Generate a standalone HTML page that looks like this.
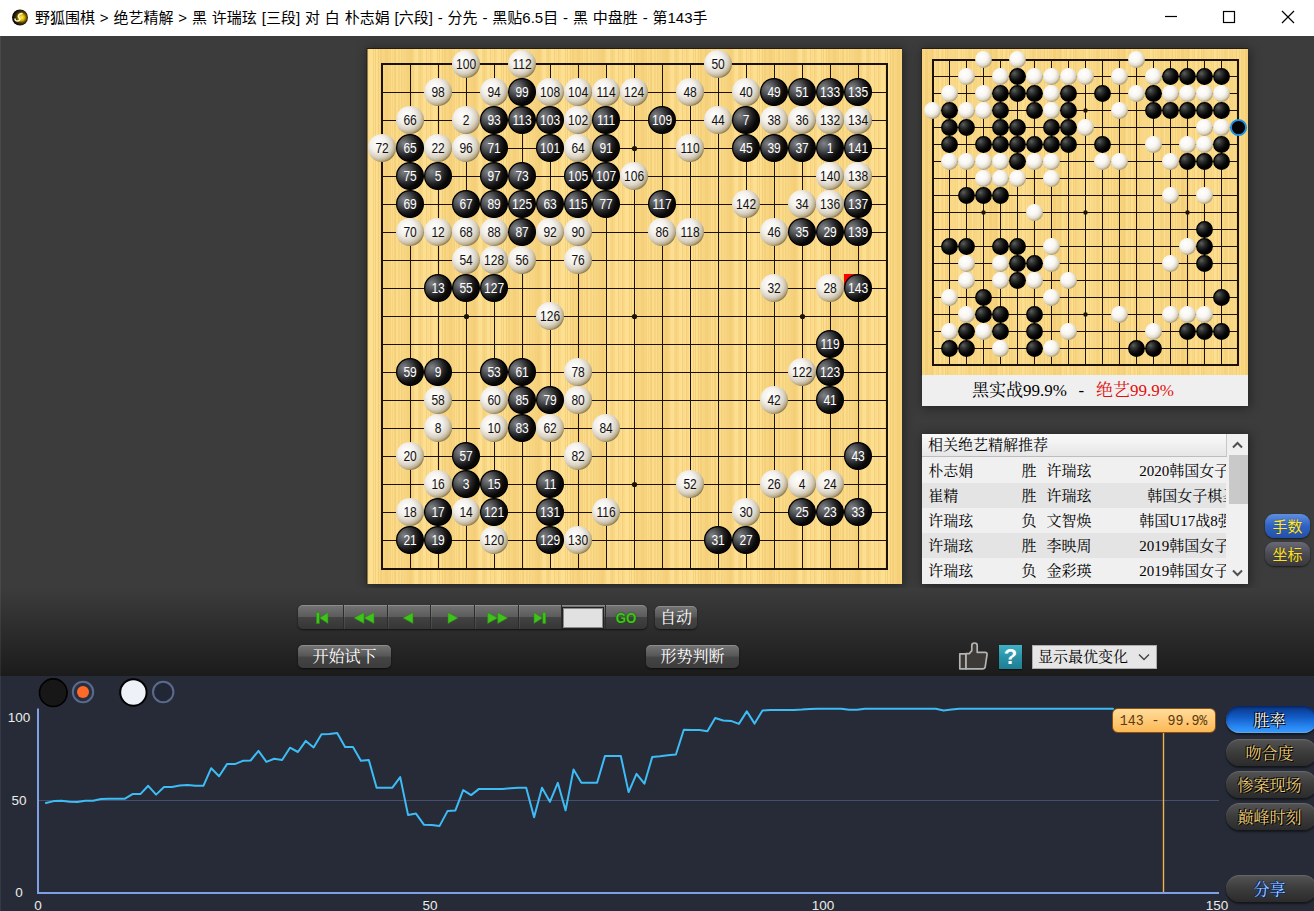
<!DOCTYPE html>
<html lang="zh-CN"><head><meta charset="utf-8"><title>野狐围棋</title>
<style>
html,body{margin:0;padding:0}
body{width:1314px;height:911px;overflow:hidden;position:relative;background:#3c3c3c;font-family:"Liberation Sans","Noto Sans CJK SC",sans-serif}
.abs{position:absolute;display:block}
.sh{box-shadow:1px 1px 10px 1px rgba(0,0,0,.42)}
#title{left:0;top:0;width:1314px;height:36px;background:#fff}
#title .t{position:absolute;left:35px;top:0;line-height:35px;font-size:15px;color:#000;white-space:nowrap;word-spacing:0.7px;font-family:"Liberation Sans","Noto Sans CJK SC",sans-serif}
#fade{left:0;top:588px;width:1314px;height:88px;background:linear-gradient(#3c3c3c,#1b1b1b)}
.song{font-family:"Liberation Serif","Noto Serif CJK SC",serif}
#lbl{left:922px;top:375px;width:326px;height:31px;box-sizing:border-box;padding-left:50px;background:#efefef;text-align:left;line-height:31px;font-size:17px;color:#000;white-space:nowrap}
#list{left:922px;top:434px;width:326px;height:150px;background:#f0f0f0;overflow:hidden;font-size:15px;color:#000}
#list .hd{position:absolute;left:0;top:0;width:305px;height:23px;line-height:23px;padding-left:6px;box-sizing:border-box;background:linear-gradient(#fafafa,#e6e6e6);border-bottom:1px solid #bdbdbd;border-right:1px solid #c8c8c8}
.lr{position:absolute;left:0;width:304px;height:25px;line-height:27px;overflow:hidden;white-space:nowrap}
.lr span{position:absolute;top:0}
#sb{position:absolute;left:305px;top:0;width:21px;height:150px;background:#f0f0f0}
#sb i{position:absolute;left:1.5px;top:21px;width:19px;height:49px;background:#c9c9c9}
.btn{position:absolute;box-sizing:border-box;border-radius:5px;color:#fff;text-align:center;font-size:16px;background:linear-gradient(#757575,#585858 45%,#444 55%,#3c3c3c);box-shadow:0 1px 2px rgba(0,0,0,.6), inset 0 1px 0 rgba(255,255,255,.18)}
.pill{position:absolute;left:1226px;width:91px;height:27px;border-radius:13.5px;box-sizing:border-box;padding-right:4px;text-align:center;line-height:30px;font-size:16px;color:#f3d27a;background:linear-gradient(#545454,#3c3c3c 50%,#2b2b2b);box-shadow:0 2px 2px rgba(0,0,0,.5), inset 0 1px 1px rgba(255,255,255,.12);text-shadow:0 0 1px #000,1px 1px 0 #000,-1px -1px 0 #000}
</style></head><body>
<div id="title" class="abs">
<svg class="abs" style="left:11px;top:9px" width="18" height="18" viewBox="0 0 18 18"><defs><radialGradient id="ic" cx="0.6" cy="0.5" r="0.62"><stop offset="0" stop-color="#fff060"/><stop offset="0.28" stop-color="#e2b800"/><stop offset="0.55" stop-color="#4a3808"/><stop offset="0.8" stop-color="#15100a"/><stop offset="1" stop-color="#000"/></radialGradient></defs><circle cx="9" cy="8.5" r="8" fill="url(#ic)"/><path d="M11 4.500c-3 .3-4.500 2.300-3 4s1.500 3-1.500 3.500c-1.500.1-2.500-.8-2.500-2" fill="none" stroke="#fff8c8" stroke-width="1.500" stroke-linecap="round"/></svg>
<div class="t">野狐围棋 &gt; 绝艺精解 &gt; 黑 许瑞玹 [三段] 对 白 朴志娟 [六段] - 分先 - 黑贴6.5目 - 黑 中盘胜 - 第143手</div>
<svg class="abs" style="left:1150px;top:0" width="164" height="36" viewBox="1150 0 164 36"><g fill="none" stroke="#000" stroke-width="1.2"><path d="M1165 16.5h12"/><rect x="1223.500" y="11.500" width="11" height="11"/><path d="M1282 11l12 12M1294 11l-12 12"/></g></svg>
</div>

<div class="abs sh" style="left:367px;top:49px;width:535px;height:535px"></div>
<div class="abs sh" style="left:922px;top:49px;width:326px;height:357px"></div>
<div class="abs sh" style="left:922px;top:434px;width:326px;height:150px"></div>
<svg class="abs" style="left:366px;top:48px" width="537" height="537" viewBox="366 48 537 537">
<defs><pattern id="wood" width="64" height="8" patternUnits="userSpaceOnUse"><rect width="64" height="8" fill="rgb(247, 212, 128)"/><rect x="0" width="1" height="8" fill="rgb(247, 212, 128)"/><rect x="1" width="1" height="8" fill="rgb(244, 207, 120)"/><rect x="2" width="1" height="8" fill="rgb(245, 209, 124)"/><rect x="3" width="1" height="8" fill="rgb(244, 207, 120)"/><rect x="4" width="2" height="8" fill="rgb(247, 212, 128)"/><rect x="6" width="1" height="8" fill="rgb(245, 209, 124)"/><rect x="7" width="1" height="8" fill="rgb(251, 220, 140)"/><rect x="8" width="1" height="8" fill="rgb(247, 212, 128)"/><rect x="9" width="1" height="8" fill="rgb(251, 220, 140)"/><rect x="10" width="1" height="8" fill="rgb(245, 209, 124)"/><rect x="11" width="1" height="8" fill="rgb(244, 207, 120)"/><rect x="12" width="2" height="8" fill="rgb(251, 220, 140)"/><rect x="14" width="1" height="8" fill="rgb(247, 212, 128)"/><rect x="15" width="1" height="8" fill="rgb(247, 212, 128)"/><rect x="16" width="1" height="8" fill="rgb(251, 220, 140)"/><rect x="17" width="1" height="8" fill="rgb(245, 209, 124)"/><rect x="18" width="2" height="8" fill="rgb(248, 215, 132)"/><rect x="20" width="2" height="8" fill="rgb(247, 212, 128)"/><rect x="22" width="1" height="8" fill="rgb(247, 212, 128)"/><rect x="23" width="1" height="8" fill="rgb(245, 209, 124)"/><rect x="24" width="2" height="8" fill="rgb(245, 209, 124)"/><rect x="26" width="2" height="8" fill="rgb(244, 207, 120)"/><rect x="28" width="2" height="8" fill="rgb(247, 212, 128)"/><rect x="30" width="1" height="8" fill="rgb(251, 220, 140)"/><rect x="31" width="1" height="8" fill="rgb(252, 223, 145)"/><rect x="32" width="2" height="8" fill="rgb(252, 223, 145)"/><rect x="34" width="1" height="8" fill="rgb(248, 215, 132)"/><rect x="35" width="1" height="8" fill="rgb(247, 212, 128)"/><rect x="36" width="1" height="8" fill="rgb(245, 209, 124)"/><rect x="37" width="2" height="8" fill="rgb(248, 215, 132)"/><rect x="39" width="2" height="8" fill="rgb(252, 223, 145)"/><rect x="41" width="1" height="8" fill="rgb(252, 223, 145)"/><rect x="42" width="1" height="8" fill="rgb(245, 209, 124)"/><rect x="43" width="1" height="8" fill="rgb(251, 220, 140)"/><rect x="44" width="1" height="8" fill="rgb(249, 217, 136)"/><rect x="45" width="1" height="8" fill="rgb(252, 223, 145)"/><rect x="46" width="1" height="8" fill="rgb(244, 207, 120)"/><rect x="47" width="1" height="8" fill="rgb(249, 217, 136)"/><rect x="48" width="1" height="8" fill="rgb(249, 217, 136)"/><rect x="49" width="2" height="8" fill="rgb(252, 223, 145)"/><rect x="51" width="2" height="8" fill="rgb(252, 223, 145)"/><rect x="53" width="1" height="8" fill="rgb(245, 209, 124)"/><rect x="54" width="1" height="8" fill="rgb(252, 223, 145)"/><rect x="55" width="1" height="8" fill="rgb(244, 207, 120)"/><rect x="56" width="1" height="8" fill="rgb(252, 223, 145)"/><rect x="57" width="1" height="8" fill="rgb(251, 220, 140)"/><rect x="58" width="1" height="8" fill="rgb(244, 207, 120)"/><rect x="59" width="1" height="8" fill="rgb(249, 217, 136)"/><rect x="60" width="1" height="8" fill="rgb(245, 209, 124)"/><rect x="61" width="1" height="8" fill="rgb(244, 207, 120)"/><rect x="62" width="1" height="8" fill="rgb(248, 215, 132)"/><rect x="63" width="1" height="8" fill="rgb(247, 212, 128)"/></pattern>
<radialGradient id="gw" cx="0.40" cy="0.38" r="0.64" fx="0.36" fy="0.32">
<stop offset="0" stop-color="#ffffff"/><stop offset="0.46" stop-color="#f3f0eb"/><stop offset="0.74" stop-color="#d9d1c1"/><stop offset="0.9" stop-color="#bbae8e"/><stop offset="1" stop-color="#8c7c52"/></radialGradient>
<radialGradient id="gb" cx="0.30" cy="0.36" r="0.6" fx="0.27" fy="0.33">
<stop offset="0" stop-color="#808284"/><stop offset="0.35" stop-color="#58595c"/><stop offset="0.75" stop-color="#202022"/><stop offset="1" stop-color="#080808"/></radialGradient>
<radialGradient id="gws" cx="0.40" cy="0.36" r="0.66" fx="0.38" fy="0.32">
<stop offset="0" stop-color="#ffffff"/><stop offset="0.5" stop-color="#f8f6f2"/><stop offset="0.78" stop-color="#e0d9c8"/><stop offset="1" stop-color="#a89a74"/></radialGradient>
<radialGradient id="gbs" cx="0.32" cy="0.32" r="0.6" fx="0.3" fy="0.3">
<stop offset="0" stop-color="#5c5e5e"/><stop offset="0.35" stop-color="#303232"/><stop offset="0.7" stop-color="#101010"/><stop offset="1" stop-color="#000000"/></radialGradient>
</defs>
<rect x="366.5" y="48" width="535.5" height="536" fill="#241c10"/>
<rect x="367.5" y="49" width="534.5" height="535" fill="url(#wood)"/>
<path d="M410.5 64.5V568.5M382.5 92.5H886.5" stroke="#1c1204" stroke-width="1"/>
<path d="M438.5 64.5V568.5M382.5 120.5H886.5" stroke="#1c1204" stroke-width="1"/>
<path d="M466.5 64.5V568.5M382.5 148.5H886.5" stroke="#1c1204" stroke-width="1"/>
<path d="M494.5 64.5V568.5M382.5 176.5H886.5" stroke="#1c1204" stroke-width="1"/>
<path d="M522.5 64.5V568.5M382.5 204.5H886.5" stroke="#1c1204" stroke-width="1"/>
<path d="M550.5 64.5V568.5M382.5 232.5H886.5" stroke="#1c1204" stroke-width="1"/>
<path d="M578.5 64.5V568.5M382.5 260.5H886.5" stroke="#1c1204" stroke-width="1"/>
<path d="M606.5 64.5V568.5M382.5 288.5H886.5" stroke="#1c1204" stroke-width="1"/>
<path d="M634.5 64.5V568.5M382.5 316.5H886.5" stroke="#1c1204" stroke-width="1"/>
<path d="M662.5 64.5V568.5M382.5 344.5H886.5" stroke="#1c1204" stroke-width="1"/>
<path d="M690.5 64.5V568.5M382.5 372.5H886.5" stroke="#1c1204" stroke-width="1"/>
<path d="M718.5 64.5V568.5M382.5 400.5H886.5" stroke="#1c1204" stroke-width="1"/>
<path d="M746.5 64.5V568.5M382.5 428.5H886.5" stroke="#1c1204" stroke-width="1"/>
<path d="M774.5 64.5V568.5M382.5 456.5H886.5" stroke="#1c1204" stroke-width="1"/>
<path d="M802.5 64.5V568.5M382.5 484.5H886.5" stroke="#1c1204" stroke-width="1"/>
<path d="M830.5 64.5V568.5M382.5 512.5H886.5" stroke="#1c1204" stroke-width="1"/>
<path d="M858.5 64.5V568.5M382.5 540.5H886.5" stroke="#1c1204" stroke-width="1"/>
<rect x="382" y="64" width="505" height="505" fill="none" stroke="#1c1204" stroke-width="2"/>
<circle cx="466.5" cy="148.5" r="2.6" fill="#1c1204"/><circle cx="466.5" cy="316.5" r="2.6" fill="#1c1204"/><circle cx="466.5" cy="484.5" r="2.6" fill="#1c1204"/><circle cx="634.5" cy="148.5" r="2.6" fill="#1c1204"/><circle cx="634.5" cy="316.5" r="2.6" fill="#1c1204"/><circle cx="634.5" cy="484.5" r="2.6" fill="#1c1204"/><circle cx="802.5" cy="148.5" r="2.6" fill="#1c1204"/><circle cx="802.5" cy="316.5" r="2.6" fill="#1c1204"/><circle cx="802.5" cy="484.5" r="2.6" fill="#1c1204"/>
<g font-family="'Liberation Sans',sans-serif" font-size="14" text-anchor="middle">
<circle cx="466" cy="64" r="14" fill="url(#gw)"/>
<text transform="translate(466.1 68.5) scale(.86 1)" fill="#111">100</text>
<circle cx="522" cy="64" r="14" fill="url(#gw)"/>
<text transform="translate(522.1 68.5) scale(.86 1)" fill="#111">112</text>
<circle cx="718" cy="64" r="14" fill="url(#gw)"/>
<text transform="translate(718.1 68.5) scale(.86 1)" fill="#111">50</text>
<circle cx="438" cy="92" r="14" fill="url(#gw)"/>
<text transform="translate(438.1 96.5) scale(.86 1)" fill="#111">98</text>
<circle cx="494" cy="92" r="14" fill="url(#gw)"/>
<text transform="translate(494.1 96.5) scale(.86 1)" fill="#111">94</text>
<circle cx="522" cy="92" r="13.4" fill="url(#gb)" stroke="#000" stroke-width="1.2"/>
<text transform="translate(522.1 96.5) scale(.86 1)" fill="#fff">99</text>
<circle cx="550" cy="92" r="14" fill="url(#gw)"/>
<text transform="translate(550.1 96.5) scale(.86 1)" fill="#111">108</text>
<circle cx="578" cy="92" r="14" fill="url(#gw)"/>
<text transform="translate(578.1 96.5) scale(.86 1)" fill="#111">104</text>
<circle cx="606" cy="92" r="14" fill="url(#gw)"/>
<text transform="translate(606.1 96.5) scale(.86 1)" fill="#111">114</text>
<circle cx="634" cy="92" r="14" fill="url(#gw)"/>
<text transform="translate(634.1 96.5) scale(.86 1)" fill="#111">124</text>
<circle cx="690" cy="92" r="14" fill="url(#gw)"/>
<text transform="translate(690.1 96.5) scale(.86 1)" fill="#111">48</text>
<circle cx="746" cy="92" r="14" fill="url(#gw)"/>
<text transform="translate(746.1 96.5) scale(.86 1)" fill="#111">40</text>
<circle cx="774" cy="92" r="13.4" fill="url(#gb)" stroke="#000" stroke-width="1.2"/>
<text transform="translate(774.1 96.5) scale(.86 1)" fill="#fff">49</text>
<circle cx="802" cy="92" r="13.4" fill="url(#gb)" stroke="#000" stroke-width="1.2"/>
<text transform="translate(802.1 96.5) scale(.86 1)" fill="#fff">51</text>
<circle cx="830" cy="92" r="13.4" fill="url(#gb)" stroke="#000" stroke-width="1.2"/>
<text transform="translate(830.1 96.5) scale(.86 1)" fill="#fff">133</text>
<circle cx="858" cy="92" r="13.4" fill="url(#gb)" stroke="#000" stroke-width="1.2"/>
<text transform="translate(858.1 96.5) scale(.86 1)" fill="#fff">135</text>
<circle cx="410" cy="120" r="14" fill="url(#gw)"/>
<text transform="translate(410.1 124.5) scale(.86 1)" fill="#111">66</text>
<circle cx="466" cy="120" r="14" fill="url(#gw)"/>
<text transform="translate(466.1 124.5) scale(.86 1)" fill="#111">2</text>
<circle cx="494" cy="120" r="13.4" fill="url(#gb)" stroke="#000" stroke-width="1.2"/>
<text transform="translate(494.1 124.5) scale(.86 1)" fill="#fff">93</text>
<circle cx="522" cy="120" r="13.4" fill="url(#gb)" stroke="#000" stroke-width="1.2"/>
<text transform="translate(522.1 124.5) scale(.86 1)" fill="#fff">113</text>
<circle cx="550" cy="120" r="13.4" fill="url(#gb)" stroke="#000" stroke-width="1.2"/>
<text transform="translate(550.1 124.5) scale(.86 1)" fill="#fff">103</text>
<circle cx="578" cy="120" r="14" fill="url(#gw)"/>
<text transform="translate(578.1 124.5) scale(.86 1)" fill="#111">102</text>
<circle cx="606" cy="120" r="13.4" fill="url(#gb)" stroke="#000" stroke-width="1.2"/>
<text transform="translate(606.1 124.5) scale(.86 1)" fill="#fff">111</text>
<circle cx="662" cy="120" r="13.4" fill="url(#gb)" stroke="#000" stroke-width="1.2"/>
<text transform="translate(662.1 124.5) scale(.86 1)" fill="#fff">109</text>
<circle cx="718" cy="120" r="14" fill="url(#gw)"/>
<text transform="translate(718.1 124.5) scale(.86 1)" fill="#111">44</text>
<circle cx="746" cy="120" r="13.4" fill="url(#gb)" stroke="#000" stroke-width="1.2"/>
<text transform="translate(746.1 124.5) scale(.86 1)" fill="#fff">7</text>
<circle cx="774" cy="120" r="14" fill="url(#gw)"/>
<text transform="translate(774.1 124.5) scale(.86 1)" fill="#111">38</text>
<circle cx="802" cy="120" r="14" fill="url(#gw)"/>
<text transform="translate(802.1 124.5) scale(.86 1)" fill="#111">36</text>
<circle cx="830" cy="120" r="14" fill="url(#gw)"/>
<text transform="translate(830.1 124.5) scale(.86 1)" fill="#111">132</text>
<circle cx="858" cy="120" r="14" fill="url(#gw)"/>
<text transform="translate(858.1 124.5) scale(.86 1)" fill="#111">134</text>
<circle cx="382" cy="148" r="14" fill="url(#gw)"/>
<text transform="translate(382.1 152.5) scale(.86 1)" fill="#111">72</text>
<circle cx="410" cy="148" r="13.4" fill="url(#gb)" stroke="#000" stroke-width="1.2"/>
<text transform="translate(410.1 152.5) scale(.86 1)" fill="#fff">65</text>
<circle cx="438" cy="148" r="14" fill="url(#gw)"/>
<text transform="translate(438.1 152.5) scale(.86 1)" fill="#111">22</text>
<circle cx="466" cy="148" r="14" fill="url(#gw)"/>
<text transform="translate(466.1 152.5) scale(.86 1)" fill="#111">96</text>
<circle cx="494" cy="148" r="13.4" fill="url(#gb)" stroke="#000" stroke-width="1.2"/>
<text transform="translate(494.1 152.5) scale(.86 1)" fill="#fff">71</text>
<circle cx="550" cy="148" r="13.4" fill="url(#gb)" stroke="#000" stroke-width="1.2"/>
<text transform="translate(550.1 152.5) scale(.86 1)" fill="#fff">101</text>
<circle cx="578" cy="148" r="14" fill="url(#gw)"/>
<text transform="translate(578.1 152.5) scale(.86 1)" fill="#111">64</text>
<circle cx="606" cy="148" r="13.4" fill="url(#gb)" stroke="#000" stroke-width="1.2"/>
<text transform="translate(606.1 152.5) scale(.86 1)" fill="#fff">91</text>
<circle cx="690" cy="148" r="14" fill="url(#gw)"/>
<text transform="translate(690.1 152.5) scale(.86 1)" fill="#111">110</text>
<circle cx="746" cy="148" r="13.4" fill="url(#gb)" stroke="#000" stroke-width="1.2"/>
<text transform="translate(746.1 152.5) scale(.86 1)" fill="#fff">45</text>
<circle cx="774" cy="148" r="13.4" fill="url(#gb)" stroke="#000" stroke-width="1.2"/>
<text transform="translate(774.1 152.5) scale(.86 1)" fill="#fff">39</text>
<circle cx="802" cy="148" r="13.4" fill="url(#gb)" stroke="#000" stroke-width="1.2"/>
<text transform="translate(802.1 152.5) scale(.86 1)" fill="#fff">37</text>
<circle cx="830" cy="148" r="13.4" fill="url(#gb)" stroke="#000" stroke-width="1.2"/>
<text transform="translate(830.1 152.5) scale(.86 1)" fill="#fff">1</text>
<circle cx="858" cy="148" r="13.4" fill="url(#gb)" stroke="#000" stroke-width="1.2"/>
<text transform="translate(858.1 152.5) scale(.86 1)" fill="#fff">141</text>
<circle cx="410" cy="176" r="13.4" fill="url(#gb)" stroke="#000" stroke-width="1.2"/>
<text transform="translate(410.1 180.5) scale(.86 1)" fill="#fff">75</text>
<circle cx="438" cy="176" r="13.4" fill="url(#gb)" stroke="#000" stroke-width="1.2"/>
<text transform="translate(438.1 180.5) scale(.86 1)" fill="#fff">5</text>
<circle cx="494" cy="176" r="13.4" fill="url(#gb)" stroke="#000" stroke-width="1.2"/>
<text transform="translate(494.1 180.5) scale(.86 1)" fill="#fff">97</text>
<circle cx="522" cy="176" r="13.4" fill="url(#gb)" stroke="#000" stroke-width="1.2"/>
<text transform="translate(522.1 180.5) scale(.86 1)" fill="#fff">73</text>
<circle cx="578" cy="176" r="13.4" fill="url(#gb)" stroke="#000" stroke-width="1.2"/>
<text transform="translate(578.1 180.5) scale(.86 1)" fill="#fff">105</text>
<circle cx="606" cy="176" r="13.4" fill="url(#gb)" stroke="#000" stroke-width="1.2"/>
<text transform="translate(606.1 180.5) scale(.86 1)" fill="#fff">107</text>
<circle cx="634" cy="176" r="14" fill="url(#gw)"/>
<text transform="translate(634.1 180.5) scale(.86 1)" fill="#111">106</text>
<circle cx="830" cy="176" r="14" fill="url(#gw)"/>
<text transform="translate(830.1 180.5) scale(.86 1)" fill="#111">140</text>
<circle cx="858" cy="176" r="14" fill="url(#gw)"/>
<text transform="translate(858.1 180.5) scale(.86 1)" fill="#111">138</text>
<circle cx="410" cy="204" r="13.4" fill="url(#gb)" stroke="#000" stroke-width="1.2"/>
<text transform="translate(410.1 208.5) scale(.86 1)" fill="#fff">69</text>
<circle cx="466" cy="204" r="13.4" fill="url(#gb)" stroke="#000" stroke-width="1.2"/>
<text transform="translate(466.1 208.5) scale(.86 1)" fill="#fff">67</text>
<circle cx="494" cy="204" r="13.4" fill="url(#gb)" stroke="#000" stroke-width="1.2"/>
<text transform="translate(494.1 208.5) scale(.86 1)" fill="#fff">89</text>
<circle cx="522" cy="204" r="13.4" fill="url(#gb)" stroke="#000" stroke-width="1.2"/>
<text transform="translate(522.1 208.5) scale(.86 1)" fill="#fff">125</text>
<circle cx="550" cy="204" r="13.4" fill="url(#gb)" stroke="#000" stroke-width="1.2"/>
<text transform="translate(550.1 208.5) scale(.86 1)" fill="#fff">63</text>
<circle cx="578" cy="204" r="13.4" fill="url(#gb)" stroke="#000" stroke-width="1.2"/>
<text transform="translate(578.1 208.5) scale(.86 1)" fill="#fff">115</text>
<circle cx="606" cy="204" r="13.4" fill="url(#gb)" stroke="#000" stroke-width="1.2"/>
<text transform="translate(606.1 208.5) scale(.86 1)" fill="#fff">77</text>
<circle cx="662" cy="204" r="13.4" fill="url(#gb)" stroke="#000" stroke-width="1.2"/>
<text transform="translate(662.1 208.5) scale(.86 1)" fill="#fff">117</text>
<circle cx="746" cy="204" r="14" fill="url(#gw)"/>
<text transform="translate(746.1 208.5) scale(.86 1)" fill="#111">142</text>
<circle cx="802" cy="204" r="14" fill="url(#gw)"/>
<text transform="translate(802.1 208.5) scale(.86 1)" fill="#111">34</text>
<circle cx="830" cy="204" r="14" fill="url(#gw)"/>
<text transform="translate(830.1 208.5) scale(.86 1)" fill="#111">136</text>
<circle cx="858" cy="204" r="13.4" fill="url(#gb)" stroke="#000" stroke-width="1.2"/>
<text transform="translate(858.1 208.5) scale(.86 1)" fill="#fff">137</text>
<circle cx="410" cy="232" r="14" fill="url(#gw)"/>
<text transform="translate(410.1 236.5) scale(.86 1)" fill="#111">70</text>
<circle cx="438" cy="232" r="14" fill="url(#gw)"/>
<text transform="translate(438.1 236.5) scale(.86 1)" fill="#111">12</text>
<circle cx="466" cy="232" r="14" fill="url(#gw)"/>
<text transform="translate(466.1 236.5) scale(.86 1)" fill="#111">68</text>
<circle cx="494" cy="232" r="14" fill="url(#gw)"/>
<text transform="translate(494.1 236.5) scale(.86 1)" fill="#111">88</text>
<circle cx="522" cy="232" r="13.4" fill="url(#gb)" stroke="#000" stroke-width="1.2"/>
<text transform="translate(522.1 236.5) scale(.86 1)" fill="#fff">87</text>
<circle cx="550" cy="232" r="14" fill="url(#gw)"/>
<text transform="translate(550.1 236.5) scale(.86 1)" fill="#111">92</text>
<circle cx="578" cy="232" r="14" fill="url(#gw)"/>
<text transform="translate(578.1 236.5) scale(.86 1)" fill="#111">90</text>
<circle cx="662" cy="232" r="14" fill="url(#gw)"/>
<text transform="translate(662.1 236.5) scale(.86 1)" fill="#111">86</text>
<circle cx="690" cy="232" r="14" fill="url(#gw)"/>
<text transform="translate(690.1 236.5) scale(.86 1)" fill="#111">118</text>
<circle cx="774" cy="232" r="14" fill="url(#gw)"/>
<text transform="translate(774.1 236.5) scale(.86 1)" fill="#111">46</text>
<circle cx="802" cy="232" r="13.4" fill="url(#gb)" stroke="#000" stroke-width="1.2"/>
<text transform="translate(802.1 236.5) scale(.86 1)" fill="#fff">35</text>
<circle cx="830" cy="232" r="13.4" fill="url(#gb)" stroke="#000" stroke-width="1.2"/>
<text transform="translate(830.1 236.5) scale(.86 1)" fill="#fff">29</text>
<circle cx="858" cy="232" r="13.4" fill="url(#gb)" stroke="#000" stroke-width="1.2"/>
<text transform="translate(858.1 236.5) scale(.86 1)" fill="#fff">139</text>
<circle cx="466" cy="260" r="14" fill="url(#gw)"/>
<text transform="translate(466.1 264.5) scale(.86 1)" fill="#111">54</text>
<circle cx="494" cy="260" r="14" fill="url(#gw)"/>
<text transform="translate(494.1 264.5) scale(.86 1)" fill="#111">128</text>
<circle cx="522" cy="260" r="14" fill="url(#gw)"/>
<text transform="translate(522.1 264.5) scale(.86 1)" fill="#111">56</text>
<circle cx="578" cy="260" r="14" fill="url(#gw)"/>
<text transform="translate(578.1 264.5) scale(.86 1)" fill="#111">76</text>
<circle cx="438" cy="288" r="13.4" fill="url(#gb)" stroke="#000" stroke-width="1.2"/>
<text transform="translate(438.1 292.5) scale(.86 1)" fill="#fff">13</text>
<circle cx="466" cy="288" r="13.4" fill="url(#gb)" stroke="#000" stroke-width="1.2"/>
<text transform="translate(466.1 292.5) scale(.86 1)" fill="#fff">55</text>
<circle cx="494" cy="288" r="13.4" fill="url(#gb)" stroke="#000" stroke-width="1.2"/>
<text transform="translate(494.1 292.5) scale(.86 1)" fill="#fff">127</text>
<circle cx="774" cy="288" r="14" fill="url(#gw)"/>
<text transform="translate(774.1 292.5) scale(.86 1)" fill="#111">32</text>
<circle cx="830" cy="288" r="14" fill="url(#gw)"/>
<text transform="translate(830.1 292.5) scale(.86 1)" fill="#111">28</text>
<path d="M844 274h14l-14 14z" fill="#f00"/>
<circle cx="858" cy="288" r="13.4" fill="url(#gb)" stroke="#000" stroke-width="1.2"/>
<text transform="translate(858.1 292.5) scale(.86 1)" fill="#fff">143</text>
<circle cx="550" cy="316" r="14" fill="url(#gw)"/>
<text transform="translate(550.1 320.5) scale(.86 1)" fill="#111">126</text>
<circle cx="830" cy="344" r="13.4" fill="url(#gb)" stroke="#000" stroke-width="1.2"/>
<text transform="translate(830.1 348.5) scale(.86 1)" fill="#fff">119</text>
<circle cx="410" cy="372" r="13.4" fill="url(#gb)" stroke="#000" stroke-width="1.2"/>
<text transform="translate(410.1 376.5) scale(.86 1)" fill="#fff">59</text>
<circle cx="438" cy="372" r="13.4" fill="url(#gb)" stroke="#000" stroke-width="1.2"/>
<text transform="translate(438.1 376.5) scale(.86 1)" fill="#fff">9</text>
<circle cx="494" cy="372" r="13.4" fill="url(#gb)" stroke="#000" stroke-width="1.2"/>
<text transform="translate(494.1 376.5) scale(.86 1)" fill="#fff">53</text>
<circle cx="522" cy="372" r="13.4" fill="url(#gb)" stroke="#000" stroke-width="1.2"/>
<text transform="translate(522.1 376.5) scale(.86 1)" fill="#fff">61</text>
<circle cx="578" cy="372" r="14" fill="url(#gw)"/>
<text transform="translate(578.1 376.5) scale(.86 1)" fill="#111">78</text>
<circle cx="802" cy="372" r="14" fill="url(#gw)"/>
<text transform="translate(802.1 376.5) scale(.86 1)" fill="#111">122</text>
<circle cx="830" cy="372" r="13.4" fill="url(#gb)" stroke="#000" stroke-width="1.2"/>
<text transform="translate(830.1 376.5) scale(.86 1)" fill="#fff">123</text>
<circle cx="438" cy="400" r="14" fill="url(#gw)"/>
<text transform="translate(438.1 404.5) scale(.86 1)" fill="#111">58</text>
<circle cx="494" cy="400" r="14" fill="url(#gw)"/>
<text transform="translate(494.1 404.5) scale(.86 1)" fill="#111">60</text>
<circle cx="522" cy="400" r="13.4" fill="url(#gb)" stroke="#000" stroke-width="1.2"/>
<text transform="translate(522.1 404.5) scale(.86 1)" fill="#fff">85</text>
<circle cx="550" cy="400" r="13.4" fill="url(#gb)" stroke="#000" stroke-width="1.2"/>
<text transform="translate(550.1 404.5) scale(.86 1)" fill="#fff">79</text>
<circle cx="578" cy="400" r="14" fill="url(#gw)"/>
<text transform="translate(578.1 404.5) scale(.86 1)" fill="#111">80</text>
<circle cx="774" cy="400" r="14" fill="url(#gw)"/>
<text transform="translate(774.1 404.5) scale(.86 1)" fill="#111">42</text>
<circle cx="830" cy="400" r="13.4" fill="url(#gb)" stroke="#000" stroke-width="1.2"/>
<text transform="translate(830.1 404.5) scale(.86 1)" fill="#fff">41</text>
<circle cx="438" cy="428" r="14" fill="url(#gw)"/>
<text transform="translate(438.1 432.5) scale(.86 1)" fill="#111">8</text>
<circle cx="494" cy="428" r="14" fill="url(#gw)"/>
<text transform="translate(494.1 432.5) scale(.86 1)" fill="#111">10</text>
<circle cx="522" cy="428" r="13.4" fill="url(#gb)" stroke="#000" stroke-width="1.2"/>
<text transform="translate(522.1 432.5) scale(.86 1)" fill="#fff">83</text>
<circle cx="550" cy="428" r="14" fill="url(#gw)"/>
<text transform="translate(550.1 432.5) scale(.86 1)" fill="#111">62</text>
<circle cx="606" cy="428" r="14" fill="url(#gw)"/>
<text transform="translate(606.1 432.5) scale(.86 1)" fill="#111">84</text>
<circle cx="410" cy="456" r="14" fill="url(#gw)"/>
<text transform="translate(410.1 460.5) scale(.86 1)" fill="#111">20</text>
<circle cx="466" cy="456" r="13.4" fill="url(#gb)" stroke="#000" stroke-width="1.2"/>
<text transform="translate(466.1 460.5) scale(.86 1)" fill="#fff">57</text>
<circle cx="578" cy="456" r="14" fill="url(#gw)"/>
<text transform="translate(578.1 460.5) scale(.86 1)" fill="#111">82</text>
<circle cx="858" cy="456" r="13.4" fill="url(#gb)" stroke="#000" stroke-width="1.2"/>
<text transform="translate(858.1 460.5) scale(.86 1)" fill="#fff">43</text>
<circle cx="438" cy="484" r="14" fill="url(#gw)"/>
<text transform="translate(438.1 488.5) scale(.86 1)" fill="#111">16</text>
<circle cx="466" cy="484" r="13.4" fill="url(#gb)" stroke="#000" stroke-width="1.2"/>
<text transform="translate(466.1 488.5) scale(.86 1)" fill="#fff">3</text>
<circle cx="494" cy="484" r="13.4" fill="url(#gb)" stroke="#000" stroke-width="1.2"/>
<text transform="translate(494.1 488.5) scale(.86 1)" fill="#fff">15</text>
<circle cx="550" cy="484" r="13.4" fill="url(#gb)" stroke="#000" stroke-width="1.2"/>
<text transform="translate(550.1 488.5) scale(.86 1)" fill="#fff">11</text>
<circle cx="690" cy="484" r="14" fill="url(#gw)"/>
<text transform="translate(690.1 488.5) scale(.86 1)" fill="#111">52</text>
<circle cx="774" cy="484" r="14" fill="url(#gw)"/>
<text transform="translate(774.1 488.5) scale(.86 1)" fill="#111">26</text>
<circle cx="802" cy="484" r="14" fill="url(#gw)"/>
<text transform="translate(802.1 488.5) scale(.86 1)" fill="#111">4</text>
<circle cx="830" cy="484" r="14" fill="url(#gw)"/>
<text transform="translate(830.1 488.5) scale(.86 1)" fill="#111">24</text>
<circle cx="410" cy="512" r="14" fill="url(#gw)"/>
<text transform="translate(410.1 516.5) scale(.86 1)" fill="#111">18</text>
<circle cx="438" cy="512" r="13.4" fill="url(#gb)" stroke="#000" stroke-width="1.2"/>
<text transform="translate(438.1 516.5) scale(.86 1)" fill="#fff">17</text>
<circle cx="466" cy="512" r="14" fill="url(#gw)"/>
<text transform="translate(466.1 516.5) scale(.86 1)" fill="#111">14</text>
<circle cx="494" cy="512" r="13.4" fill="url(#gb)" stroke="#000" stroke-width="1.2"/>
<text transform="translate(494.1 516.5) scale(.86 1)" fill="#fff">121</text>
<circle cx="550" cy="512" r="13.4" fill="url(#gb)" stroke="#000" stroke-width="1.2"/>
<text transform="translate(550.1 516.5) scale(.86 1)" fill="#fff">131</text>
<circle cx="606" cy="512" r="14" fill="url(#gw)"/>
<text transform="translate(606.1 516.5) scale(.86 1)" fill="#111">116</text>
<circle cx="746" cy="512" r="14" fill="url(#gw)"/>
<text transform="translate(746.1 516.5) scale(.86 1)" fill="#111">30</text>
<circle cx="802" cy="512" r="13.4" fill="url(#gb)" stroke="#000" stroke-width="1.2"/>
<text transform="translate(802.1 516.5) scale(.86 1)" fill="#fff">25</text>
<circle cx="830" cy="512" r="13.4" fill="url(#gb)" stroke="#000" stroke-width="1.2"/>
<text transform="translate(830.1 516.5) scale(.86 1)" fill="#fff">23</text>
<circle cx="858" cy="512" r="13.4" fill="url(#gb)" stroke="#000" stroke-width="1.2"/>
<text transform="translate(858.1 516.5) scale(.86 1)" fill="#fff">33</text>
<circle cx="410" cy="540" r="13.4" fill="url(#gb)" stroke="#000" stroke-width="1.2"/>
<text transform="translate(410.1 544.5) scale(.86 1)" fill="#fff">21</text>
<circle cx="438" cy="540" r="13.4" fill="url(#gb)" stroke="#000" stroke-width="1.2"/>
<text transform="translate(438.1 544.5) scale(.86 1)" fill="#fff">19</text>
<circle cx="494" cy="540" r="14" fill="url(#gw)"/>
<text transform="translate(494.1 544.5) scale(.86 1)" fill="#111">120</text>
<circle cx="550" cy="540" r="13.4" fill="url(#gb)" stroke="#000" stroke-width="1.2"/>
<text transform="translate(550.1 544.5) scale(.86 1)" fill="#fff">129</text>
<circle cx="578" cy="540" r="14" fill="url(#gw)"/>
<text transform="translate(578.1 544.5) scale(.86 1)" fill="#111">130</text>
<circle cx="718" cy="540" r="13.4" fill="url(#gb)" stroke="#000" stroke-width="1.2"/>
<text transform="translate(718.1 544.5) scale(.86 1)" fill="#fff">31</text>
<circle cx="746" cy="540" r="13.4" fill="url(#gb)" stroke="#000" stroke-width="1.2"/>
<text transform="translate(746.1 544.5) scale(.86 1)" fill="#fff">27</text>
</g>
</svg>
<svg class="abs" style="left:921px;top:48px" width="328" height="328" viewBox="921 48 328 328">
<defs><pattern id="wood2" width="64" height="8" patternUnits="userSpaceOnUse"><rect width="64" height="8" fill="rgb(247, 212, 128)"/><rect x="0" width="1" height="8" fill="rgb(251, 220, 140)"/><rect x="1" width="1" height="8" fill="rgb(245, 209, 124)"/><rect x="2" width="1" height="8" fill="rgb(252, 223, 145)"/><rect x="3" width="1" height="8" fill="rgb(248, 215, 132)"/><rect x="4" width="1" height="8" fill="rgb(251, 220, 140)"/><rect x="5" width="2" height="8" fill="rgb(248, 215, 132)"/><rect x="7" width="1" height="8" fill="rgb(249, 217, 136)"/><rect x="8" width="1" height="8" fill="rgb(247, 212, 128)"/><rect x="9" width="1" height="8" fill="rgb(245, 209, 124)"/><rect x="10" width="1" height="8" fill="rgb(247, 212, 128)"/><rect x="11" width="1" height="8" fill="rgb(247, 212, 128)"/><rect x="12" width="1" height="8" fill="rgb(252, 223, 145)"/><rect x="13" width="2" height="8" fill="rgb(247, 212, 128)"/><rect x="15" width="1" height="8" fill="rgb(248, 215, 132)"/><rect x="16" width="1" height="8" fill="rgb(247, 212, 128)"/><rect x="17" width="1" height="8" fill="rgb(249, 217, 136)"/><rect x="18" width="2" height="8" fill="rgb(249, 217, 136)"/><rect x="20" width="1" height="8" fill="rgb(244, 207, 120)"/><rect x="21" width="1" height="8" fill="rgb(251, 220, 140)"/><rect x="22" width="1" height="8" fill="rgb(251, 220, 140)"/><rect x="23" width="1" height="8" fill="rgb(245, 209, 124)"/><rect x="24" width="1" height="8" fill="rgb(251, 220, 140)"/><rect x="25" width="1" height="8" fill="rgb(247, 212, 128)"/><rect x="26" width="1" height="8" fill="rgb(247, 212, 128)"/><rect x="27" width="1" height="8" fill="rgb(247, 212, 128)"/><rect x="28" width="1" height="8" fill="rgb(249, 217, 136)"/><rect x="29" width="2" height="8" fill="rgb(244, 207, 120)"/><rect x="31" width="1" height="8" fill="rgb(244, 207, 120)"/><rect x="32" width="2" height="8" fill="rgb(247, 212, 128)"/><rect x="34" width="2" height="8" fill="rgb(245, 209, 124)"/><rect x="36" width="1" height="8" fill="rgb(244, 207, 120)"/><rect x="37" width="1" height="8" fill="rgb(247, 212, 128)"/><rect x="38" width="2" height="8" fill="rgb(251, 220, 140)"/><rect x="40" width="1" height="8" fill="rgb(248, 215, 132)"/><rect x="41" width="1" height="8" fill="rgb(249, 217, 136)"/><rect x="42" width="1" height="8" fill="rgb(245, 209, 124)"/><rect x="43" width="1" height="8" fill="rgb(252, 223, 145)"/><rect x="44" width="1" height="8" fill="rgb(252, 223, 145)"/><rect x="45" width="1" height="8" fill="rgb(248, 215, 132)"/><rect x="46" width="1" height="8" fill="rgb(247, 212, 128)"/><rect x="47" width="1" height="8" fill="rgb(249, 217, 136)"/><rect x="48" width="1" height="8" fill="rgb(252, 223, 145)"/><rect x="49" width="1" height="8" fill="rgb(244, 207, 120)"/><rect x="50" width="1" height="8" fill="rgb(249, 217, 136)"/><rect x="51" width="1" height="8" fill="rgb(244, 207, 120)"/><rect x="52" width="2" height="8" fill="rgb(248, 215, 132)"/><rect x="54" width="1" height="8" fill="rgb(248, 215, 132)"/><rect x="55" width="2" height="8" fill="rgb(249, 217, 136)"/><rect x="57" width="1" height="8" fill="rgb(249, 217, 136)"/><rect x="58" width="1" height="8" fill="rgb(249, 217, 136)"/><rect x="59" width="1" height="8" fill="rgb(247, 212, 128)"/><rect x="60" width="1" height="8" fill="rgb(251, 220, 140)"/><rect x="61" width="1" height="8" fill="rgb(247, 212, 128)"/><rect x="62" width="2" height="8" fill="rgb(252, 223, 145)"/></pattern></defs>
<rect x="921.5" y="48" width="326.5" height="327.500" fill="#241c10"/>
<rect x="922" y="49" width="326" height="326.5" fill="url(#wood2)"/>
<path d="M949.5 59.5V365.5M932.5 76.5H1238.5" stroke="#1c1204" stroke-width="1"/>
<path d="M966.5 59.5V365.5M932.5 93.5H1238.5" stroke="#1c1204" stroke-width="1"/>
<path d="M983.5 59.5V365.5M932.5 110.5H1238.5" stroke="#1c1204" stroke-width="1"/>
<path d="M1000.5 59.5V365.5M932.5 127.5H1238.5" stroke="#1c1204" stroke-width="1"/>
<path d="M1017.5 59.5V365.5M932.5 144.5H1238.5" stroke="#1c1204" stroke-width="1"/>
<path d="M1034.5 59.5V365.5M932.5 161.5H1238.5" stroke="#1c1204" stroke-width="1"/>
<path d="M1051.5 59.5V365.5M932.5 178.5H1238.5" stroke="#1c1204" stroke-width="1"/>
<path d="M1068.5 59.5V365.5M932.5 195.5H1238.5" stroke="#1c1204" stroke-width="1"/>
<path d="M1085.5 59.5V365.5M932.5 212.5H1238.5" stroke="#1c1204" stroke-width="1"/>
<path d="M1102.5 59.5V365.5M932.5 229.5H1238.5" stroke="#1c1204" stroke-width="1"/>
<path d="M1119.5 59.5V365.5M932.5 246.5H1238.5" stroke="#1c1204" stroke-width="1"/>
<path d="M1136.5 59.5V365.5M932.5 263.5H1238.5" stroke="#1c1204" stroke-width="1"/>
<path d="M1153.5 59.5V365.5M932.5 280.5H1238.5" stroke="#1c1204" stroke-width="1"/>
<path d="M1170.5 59.5V365.5M932.5 297.5H1238.5" stroke="#1c1204" stroke-width="1"/>
<path d="M1187.5 59.5V365.5M932.5 314.5H1238.5" stroke="#1c1204" stroke-width="1"/>
<path d="M1204.5 59.5V365.5M932.5 331.5H1238.5" stroke="#1c1204" stroke-width="1"/>
<path d="M1221.5 59.5V365.5M932.5 348.5H1238.5" stroke="#1c1204" stroke-width="1"/>
<rect x="933" y="60" width="305" height="305" fill="none" stroke="#1c1204" stroke-width="2"/>
<circle cx="983.5" cy="110.5" r="2.2" fill="#1c1204"/><circle cx="983.5" cy="212.5" r="2.2" fill="#1c1204"/><circle cx="983.5" cy="314.5" r="2.2" fill="#1c1204"/><circle cx="1085.5" cy="110.5" r="2.2" fill="#1c1204"/><circle cx="1085.5" cy="212.5" r="2.2" fill="#1c1204"/><circle cx="1085.5" cy="314.5" r="2.2" fill="#1c1204"/><circle cx="1187.5" cy="110.5" r="2.2" fill="#1c1204"/><circle cx="1187.5" cy="212.5" r="2.2" fill="#1c1204"/><circle cx="1187.5" cy="314.5" r="2.2" fill="#1c1204"/>
<circle cx="983.5" cy="59.5" r="8.4" fill="url(#gws)"/>
<circle cx="1017.5" cy="59.5" r="8.4" fill="url(#gws)"/>
<circle cx="1136.5" cy="59.5" r="8.4" fill="url(#gws)"/>
<circle cx="966.5" cy="76.5" r="8.4" fill="url(#gws)"/>
<circle cx="1000.5" cy="76.5" r="8.4" fill="url(#gws)"/>
<circle cx="1017.5" cy="76.5" r="7.800000000000001" fill="url(#gbs)" stroke="#000" stroke-width="1.2"/>
<circle cx="1034.5" cy="76.5" r="8.4" fill="url(#gws)"/>
<circle cx="1051.5" cy="76.5" r="8.4" fill="url(#gws)"/>
<circle cx="1068.5" cy="76.5" r="8.4" fill="url(#gws)"/>
<circle cx="1085.5" cy="76.5" r="8.4" fill="url(#gws)"/>
<circle cx="1119.5" cy="76.5" r="8.4" fill="url(#gws)"/>
<circle cx="1153.5" cy="76.5" r="8.4" fill="url(#gws)"/>
<circle cx="1170.5" cy="76.5" r="7.800000000000001" fill="url(#gbs)" stroke="#000" stroke-width="1.2"/>
<circle cx="1187.5" cy="76.5" r="7.800000000000001" fill="url(#gbs)" stroke="#000" stroke-width="1.2"/>
<circle cx="1204.5" cy="76.5" r="7.800000000000001" fill="url(#gbs)" stroke="#000" stroke-width="1.2"/>
<circle cx="1221.5" cy="76.5" r="7.800000000000001" fill="url(#gbs)" stroke="#000" stroke-width="1.2"/>
<circle cx="949.5" cy="93.5" r="8.4" fill="url(#gws)"/>
<circle cx="983.5" cy="93.5" r="8.4" fill="url(#gws)"/>
<circle cx="1000.5" cy="93.5" r="7.800000000000001" fill="url(#gbs)" stroke="#000" stroke-width="1.2"/>
<circle cx="1017.5" cy="93.5" r="7.800000000000001" fill="url(#gbs)" stroke="#000" stroke-width="1.2"/>
<circle cx="1034.5" cy="93.5" r="7.800000000000001" fill="url(#gbs)" stroke="#000" stroke-width="1.2"/>
<circle cx="1051.5" cy="93.5" r="8.4" fill="url(#gws)"/>
<circle cx="1068.5" cy="93.5" r="7.800000000000001" fill="url(#gbs)" stroke="#000" stroke-width="1.2"/>
<circle cx="1102.5" cy="93.5" r="7.800000000000001" fill="url(#gbs)" stroke="#000" stroke-width="1.2"/>
<circle cx="1136.5" cy="93.5" r="8.4" fill="url(#gws)"/>
<circle cx="1153.5" cy="93.5" r="7.800000000000001" fill="url(#gbs)" stroke="#000" stroke-width="1.2"/>
<circle cx="1170.5" cy="93.5" r="8.4" fill="url(#gws)"/>
<circle cx="1187.5" cy="93.5" r="8.4" fill="url(#gws)"/>
<circle cx="1204.5" cy="93.5" r="8.4" fill="url(#gws)"/>
<circle cx="1221.5" cy="93.5" r="8.4" fill="url(#gws)"/>
<circle cx="932.5" cy="110.5" r="8.4" fill="url(#gws)"/>
<circle cx="949.5" cy="110.5" r="7.800000000000001" fill="url(#gbs)" stroke="#000" stroke-width="1.2"/>
<circle cx="966.5" cy="110.5" r="8.4" fill="url(#gws)"/>
<circle cx="983.5" cy="110.5" r="8.4" fill="url(#gws)"/>
<circle cx="1000.5" cy="110.5" r="7.800000000000001" fill="url(#gbs)" stroke="#000" stroke-width="1.2"/>
<circle cx="1034.5" cy="110.5" r="7.800000000000001" fill="url(#gbs)" stroke="#000" stroke-width="1.2"/>
<circle cx="1051.5" cy="110.5" r="8.4" fill="url(#gws)"/>
<circle cx="1068.5" cy="110.5" r="7.800000000000001" fill="url(#gbs)" stroke="#000" stroke-width="1.2"/>
<circle cx="1119.5" cy="110.5" r="8.4" fill="url(#gws)"/>
<circle cx="1153.5" cy="110.5" r="7.800000000000001" fill="url(#gbs)" stroke="#000" stroke-width="1.2"/>
<circle cx="1170.5" cy="110.5" r="7.800000000000001" fill="url(#gbs)" stroke="#000" stroke-width="1.2"/>
<circle cx="1187.5" cy="110.5" r="7.800000000000001" fill="url(#gbs)" stroke="#000" stroke-width="1.2"/>
<circle cx="1204.5" cy="110.5" r="7.800000000000001" fill="url(#gbs)" stroke="#000" stroke-width="1.2"/>
<circle cx="1221.5" cy="110.5" r="7.800000000000001" fill="url(#gbs)" stroke="#000" stroke-width="1.2"/>
<circle cx="949.5" cy="127.5" r="7.800000000000001" fill="url(#gbs)" stroke="#000" stroke-width="1.2"/>
<circle cx="966.5" cy="127.5" r="7.800000000000001" fill="url(#gbs)" stroke="#000" stroke-width="1.2"/>
<circle cx="1000.5" cy="127.5" r="7.800000000000001" fill="url(#gbs)" stroke="#000" stroke-width="1.2"/>
<circle cx="1017.5" cy="127.5" r="7.800000000000001" fill="url(#gbs)" stroke="#000" stroke-width="1.2"/>
<circle cx="1051.5" cy="127.5" r="7.800000000000001" fill="url(#gbs)" stroke="#000" stroke-width="1.2"/>
<circle cx="1068.5" cy="127.5" r="7.800000000000001" fill="url(#gbs)" stroke="#000" stroke-width="1.2"/>
<circle cx="1085.5" cy="127.5" r="8.4" fill="url(#gws)"/>
<circle cx="1204.5" cy="127.5" r="8.4" fill="url(#gws)"/>
<circle cx="1221.5" cy="127.5" r="8.4" fill="url(#gws)"/>
<circle cx="949.5" cy="144.5" r="7.800000000000001" fill="url(#gbs)" stroke="#000" stroke-width="1.2"/>
<circle cx="983.5" cy="144.5" r="7.800000000000001" fill="url(#gbs)" stroke="#000" stroke-width="1.2"/>
<circle cx="1000.5" cy="144.5" r="7.800000000000001" fill="url(#gbs)" stroke="#000" stroke-width="1.2"/>
<circle cx="1017.5" cy="144.5" r="7.800000000000001" fill="url(#gbs)" stroke="#000" stroke-width="1.2"/>
<circle cx="1034.5" cy="144.5" r="7.800000000000001" fill="url(#gbs)" stroke="#000" stroke-width="1.2"/>
<circle cx="1051.5" cy="144.5" r="7.800000000000001" fill="url(#gbs)" stroke="#000" stroke-width="1.2"/>
<circle cx="1068.5" cy="144.5" r="7.800000000000001" fill="url(#gbs)" stroke="#000" stroke-width="1.2"/>
<circle cx="1102.5" cy="144.5" r="7.800000000000001" fill="url(#gbs)" stroke="#000" stroke-width="1.2"/>
<circle cx="1153.5" cy="144.5" r="8.4" fill="url(#gws)"/>
<circle cx="1187.5" cy="144.5" r="8.4" fill="url(#gws)"/>
<circle cx="1204.5" cy="144.5" r="8.4" fill="url(#gws)"/>
<circle cx="1221.5" cy="144.5" r="7.800000000000001" fill="url(#gbs)" stroke="#000" stroke-width="1.2"/>
<circle cx="949.5" cy="161.5" r="8.4" fill="url(#gws)"/>
<circle cx="966.5" cy="161.5" r="8.4" fill="url(#gws)"/>
<circle cx="983.5" cy="161.5" r="8.4" fill="url(#gws)"/>
<circle cx="1000.5" cy="161.5" r="8.4" fill="url(#gws)"/>
<circle cx="1017.5" cy="161.5" r="7.800000000000001" fill="url(#gbs)" stroke="#000" stroke-width="1.2"/>
<circle cx="1034.5" cy="161.5" r="8.4" fill="url(#gws)"/>
<circle cx="1051.5" cy="161.5" r="8.4" fill="url(#gws)"/>
<circle cx="1102.5" cy="161.5" r="8.4" fill="url(#gws)"/>
<circle cx="1119.5" cy="161.5" r="8.4" fill="url(#gws)"/>
<circle cx="1170.5" cy="161.5" r="8.4" fill="url(#gws)"/>
<circle cx="1187.5" cy="161.5" r="7.800000000000001" fill="url(#gbs)" stroke="#000" stroke-width="1.2"/>
<circle cx="1204.5" cy="161.5" r="7.800000000000001" fill="url(#gbs)" stroke="#000" stroke-width="1.2"/>
<circle cx="1221.5" cy="161.5" r="7.800000000000001" fill="url(#gbs)" stroke="#000" stroke-width="1.2"/>
<circle cx="983.5" cy="178.5" r="8.4" fill="url(#gws)"/>
<circle cx="1000.5" cy="178.5" r="8.4" fill="url(#gws)"/>
<circle cx="1017.5" cy="178.5" r="8.4" fill="url(#gws)"/>
<circle cx="1051.5" cy="178.5" r="8.4" fill="url(#gws)"/>
<circle cx="966.5" cy="195.5" r="7.800000000000001" fill="url(#gbs)" stroke="#000" stroke-width="1.2"/>
<circle cx="983.5" cy="195.5" r="7.800000000000001" fill="url(#gbs)" stroke="#000" stroke-width="1.2"/>
<circle cx="1000.5" cy="195.5" r="7.800000000000001" fill="url(#gbs)" stroke="#000" stroke-width="1.2"/>
<circle cx="1170.5" cy="195.5" r="8.4" fill="url(#gws)"/>
<circle cx="1204.5" cy="195.5" r="8.4" fill="url(#gws)"/>
<circle cx="1034.5" cy="212.5" r="8.4" fill="url(#gws)"/>
<circle cx="1204.5" cy="229.5" r="7.800000000000001" fill="url(#gbs)" stroke="#000" stroke-width="1.2"/>
<circle cx="949.5" cy="246.5" r="7.800000000000001" fill="url(#gbs)" stroke="#000" stroke-width="1.2"/>
<circle cx="966.5" cy="246.5" r="7.800000000000001" fill="url(#gbs)" stroke="#000" stroke-width="1.2"/>
<circle cx="1000.5" cy="246.5" r="7.800000000000001" fill="url(#gbs)" stroke="#000" stroke-width="1.2"/>
<circle cx="1017.5" cy="246.5" r="7.800000000000001" fill="url(#gbs)" stroke="#000" stroke-width="1.2"/>
<circle cx="1051.5" cy="246.5" r="8.4" fill="url(#gws)"/>
<circle cx="1187.5" cy="246.5" r="8.4" fill="url(#gws)"/>
<circle cx="1204.5" cy="246.5" r="7.800000000000001" fill="url(#gbs)" stroke="#000" stroke-width="1.2"/>
<circle cx="966.5" cy="263.5" r="8.4" fill="url(#gws)"/>
<circle cx="1000.5" cy="263.5" r="8.4" fill="url(#gws)"/>
<circle cx="1017.5" cy="263.5" r="7.800000000000001" fill="url(#gbs)" stroke="#000" stroke-width="1.2"/>
<circle cx="1034.5" cy="263.5" r="7.800000000000001" fill="url(#gbs)" stroke="#000" stroke-width="1.2"/>
<circle cx="1051.5" cy="263.5" r="8.4" fill="url(#gws)"/>
<circle cx="1170.5" cy="263.5" r="8.4" fill="url(#gws)"/>
<circle cx="1204.5" cy="263.5" r="7.800000000000001" fill="url(#gbs)" stroke="#000" stroke-width="1.2"/>
<circle cx="966.5" cy="280.5" r="8.4" fill="url(#gws)"/>
<circle cx="1000.5" cy="280.5" r="8.4" fill="url(#gws)"/>
<circle cx="1017.5" cy="280.5" r="7.800000000000001" fill="url(#gbs)" stroke="#000" stroke-width="1.2"/>
<circle cx="1034.5" cy="280.5" r="8.4" fill="url(#gws)"/>
<circle cx="1068.5" cy="280.5" r="8.4" fill="url(#gws)"/>
<circle cx="949.5" cy="297.5" r="8.4" fill="url(#gws)"/>
<circle cx="983.5" cy="297.5" r="7.800000000000001" fill="url(#gbs)" stroke="#000" stroke-width="1.2"/>
<circle cx="1051.5" cy="297.5" r="8.4" fill="url(#gws)"/>
<circle cx="1221.5" cy="297.5" r="7.800000000000001" fill="url(#gbs)" stroke="#000" stroke-width="1.2"/>
<circle cx="966.5" cy="314.5" r="8.4" fill="url(#gws)"/>
<circle cx="983.5" cy="314.5" r="7.800000000000001" fill="url(#gbs)" stroke="#000" stroke-width="1.2"/>
<circle cx="1000.5" cy="314.5" r="7.800000000000001" fill="url(#gbs)" stroke="#000" stroke-width="1.2"/>
<circle cx="1034.5" cy="314.5" r="7.800000000000001" fill="url(#gbs)" stroke="#000" stroke-width="1.2"/>
<circle cx="1119.5" cy="314.5" r="8.4" fill="url(#gws)"/>
<circle cx="1170.5" cy="314.5" r="8.4" fill="url(#gws)"/>
<circle cx="1187.5" cy="314.5" r="8.4" fill="url(#gws)"/>
<circle cx="1204.5" cy="314.5" r="8.4" fill="url(#gws)"/>
<circle cx="949.5" cy="331.5" r="8.4" fill="url(#gws)"/>
<circle cx="966.5" cy="331.5" r="7.800000000000001" fill="url(#gbs)" stroke="#000" stroke-width="1.2"/>
<circle cx="983.5" cy="331.5" r="8.4" fill="url(#gws)"/>
<circle cx="1000.5" cy="331.5" r="7.800000000000001" fill="url(#gbs)" stroke="#000" stroke-width="1.2"/>
<circle cx="1034.5" cy="331.5" r="7.800000000000001" fill="url(#gbs)" stroke="#000" stroke-width="1.2"/>
<circle cx="1068.5" cy="331.5" r="8.4" fill="url(#gws)"/>
<circle cx="1153.5" cy="331.5" r="8.4" fill="url(#gws)"/>
<circle cx="1187.5" cy="331.5" r="7.800000000000001" fill="url(#gbs)" stroke="#000" stroke-width="1.2"/>
<circle cx="1204.5" cy="331.5" r="7.800000000000001" fill="url(#gbs)" stroke="#000" stroke-width="1.2"/>
<circle cx="1221.5" cy="331.5" r="7.800000000000001" fill="url(#gbs)" stroke="#000" stroke-width="1.2"/>
<circle cx="949.5" cy="348.5" r="7.800000000000001" fill="url(#gbs)" stroke="#000" stroke-width="1.2"/>
<circle cx="966.5" cy="348.5" r="7.800000000000001" fill="url(#gbs)" stroke="#000" stroke-width="1.2"/>
<circle cx="1000.5" cy="348.5" r="8.4" fill="url(#gws)"/>
<circle cx="1034.5" cy="348.5" r="7.800000000000001" fill="url(#gbs)" stroke="#000" stroke-width="1.2"/>
<circle cx="1051.5" cy="348.5" r="8.4" fill="url(#gws)"/>
<circle cx="1136.5" cy="348.5" r="7.800000000000001" fill="url(#gbs)" stroke="#000" stroke-width="1.2"/>
<circle cx="1153.5" cy="348.5" r="7.800000000000001" fill="url(#gbs)" stroke="#000" stroke-width="1.2"/>
<circle cx="1238.5" cy="127.5" r="7.6" fill="#050505" stroke="#1e90e8" stroke-width="2"/>
</svg>
<div id="lbl" class="abs song"><span>黑实战99.9%</span><span style="display:inline-block;width:29px;text-align:center">-</span><span style="color:#e01010">绝艺99.9%</span></div>
<div id="list" class="abs song">
<div class="hd">相关绝艺精解推荐</div>
<div class="lr" style="top:24px;background:#f0f0f0"><span style="left:6.300px">朴志娟</span><span style="left:99.500px">胜</span><span style="left:124.500px">许瑞玹</span><span style="left:217.29999999999995px">2020韩国女子国手战</span></div>
<div class="lr" style="top:49px;background:#e4e4e4"><span style="left:6.300px">崔精</span><span style="left:99.500px">胜</span><span style="left:124.500px">许瑞玹</span><span style="left:225.29999999999995px">韩国女子棋圣战</span></div>
<div class="lr" style="top:74px;background:#f0f0f0"><span style="left:6.300px">许瑞玹</span><span style="left:99.500px">负</span><span style="left:124.500px">文智焕</span><span style="left:217.29999999999995px">韩国U17战8强</span></div>
<div class="lr" style="top:99px;background:#e4e4e4"><span style="left:6.300px">许瑞玹</span><span style="left:99.500px">胜</span><span style="left:124.500px">李映周</span><span style="left:217.29999999999995px">2019韩国女子围棋联赛</span></div>
<div class="lr" style="top:124px;background:#f0f0f0"><span style="left:6.300px">许瑞玹</span><span style="left:99.500px">负</span><span style="left:124.500px">金彩瑛</span><span style="left:217.29999999999995px">2019韩国女子围棋联赛</span></div>

<div id="sb"><i></i><svg class="abs" style="left:0;top:0" width="21" height="150"><g fill="none" stroke="#505050" stroke-width="2"><path d="M6 13.500l4.500-4.500 4.500 4.500"/><path d="M6 136.500l4.500 4.500 4.500-4.500"/></g></svg></div>
</div>
<div class="abs" style="left:1265px;top:514px;width:45px;height:24px;border-radius:9px;background:linear-gradient(#5f8fe0,#2f62c4 50%,#2450a8);box-shadow:0 1px 2px rgba(0,0,0,.6);color:#ffe83a;font-size:15px;line-height:26px;text-align:center;text-shadow:0 0 1px #3a3000" >手数</div>
<div class="abs" style="left:1265px;top:542px;width:45px;height:24px;border-radius:9px;background:linear-gradient(#6a6a78,#4a4a52 50%,#38383c);box-shadow:0 1px 2px rgba(0,0,0,.6);color:#ffe02a;font-size:15px;line-height:26px;text-align:center;text-shadow:0 0 1px #3a3000">坐标</div>
<div id="fade" class="abs"></div>
<div class="btn" style="left:298px;top:605px;width:349px;height:24px;background:linear-gradient(#747474,#5c5c5c 48%,#424242 52%,#363636)"></div>
<div class="abs" style="left:343px;top:605px;width:1px;height:24px;background:#2c2c2c;box-shadow:44px 0 #2c2c2c,87px 0 #2c2c2c,131px 0 #2c2c2c,175px 0 #2c2c2c,218px 0 #2c2c2c,262px 0 #2c2c2c,1px 0 rgba(255,255,255,.08),45px 0 rgba(255,255,255,.08),88px 0 rgba(255,255,255,.08),132px 0 rgba(255,255,255,.08),176px 0 rgba(255,255,255,.08)"></div>
<svg class="abs" style="left:298px;top:606px" width="350" height="23" viewBox="298 606 350 23">
<g fill="#3fc21c" stroke="#2a8a10" stroke-width="0.6">
<rect x="316.4" y="612.4" width="3" height="11.2"/><path d="M328.0 612.5L319.5 618L328.0 623.5z"/>
<path d="M364 612.5L354 618L364 623.5z"/><path d="M374 612.5L364 618L374 623.5z"/>
<path d="M413 612.5L403 618L413 623.5z"/>
<path d="M448 612.5L458 618L448 623.5z"/>
<path d="M487.7 612.5L497.7 618L487.7 623.5z"/><path d="M497.7 612.5L507.7 618L497.7 623.5z"/>
<path d="M534 612.5L542.5 618L534 623.5z"/><rect x="542.8" y="612.4" width="3" height="11.2"/>
</g></svg>
<div class="abs" style="left:563px;top:608px;width:40px;height:20px;box-sizing:border-box;background:#e1e1e1;border:1px solid #8a8a8a;outline:1px solid #222"></div>
<div class="abs" style="left:605px;top:606px;width:42px;height:23px;line-height:24px;text-align:center;font-size:15px;font-weight:bold;color:#3fc21c;text-shadow:0 0 1px #1a5a08,0 0 2px #1a5a08;transform:scaleX(.88)">GO</div>
<div class="btn song" style="left:655px;top:606px;width:42px;height:23px;line-height:24px">自动</div>
<div class="btn song" style="left:298px;top:645px;width:93px;height:23px;line-height:24px">开始试下</div>
<div class="btn song" style="left:646px;top:645px;width:93px;height:23px;line-height:24px">形势判断</div>
<svg class="abs" style="left:957px;top:641px" width="33" height="31" viewBox="957 641 33 31"><g fill="#3d3a38" stroke="#b4b4b4" stroke-width="1.700" stroke-linejoin="round"><rect x="959.800" y="653.800" width="6.200" height="15"/><path d="M966 653.600h3.300l2.500-3v-5.200c0-3.200 5.400-3.200 5.400 0v6.900h7.800c1.700 0 2.300 1 2 2.500l-1.800 12c-.3 1.500-1 2.100-2.500 2.100H966z"/></g></svg>
<div class="abs" style="left:999px;top:645px;width:23px;height:24px;background:linear-gradient(#3fb3c6,#2a93a8 50%,#1e7f94);color:#fff;font-weight:bold;font-size:22px;line-height:23px;text-align:center;box-shadow:0 1px 1px rgba(0,0,0,.5)">?</div>
<div class="abs song" style="left:1032px;top:645px;width:125px;height:24px;box-sizing:border-box;background:#e6e6e6;border:1px solid #adadad;font-size:15px;line-height:23px;padding-left:5px;color:#000">显示最优变化<svg class="abs" style="left:104px;top:6px" width="14" height="10"><path d="M2 2.500l5 5 5-5" fill="none" stroke="#444" stroke-width="1.400"/></svg></div>
<svg class="abs" style="left:0;top:676px" width="1314" height="235" viewBox="0 676 1314 235">
<rect x="0" y="676" width="1314" height="235" fill="#262b37"/>
<circle cx="53.3" cy="692.7" r="13.8" fill="#171717" stroke="#000" stroke-width="1.6"/>
<circle cx="83" cy="692" r="10.2" fill="#2a2f3d" stroke="#5a6a8e" stroke-width="2"/>
<circle cx="83" cy="692" r="6" fill="#ff6a2a"/>
<circle cx="133.4" cy="692.5" r="13.2" fill="#eef2f8" stroke="#000" stroke-width="2"/>
<circle cx="163.2" cy="692" r="10.2" fill="#222736" stroke="#5a6a8e" stroke-width="2"/>
<path d="M39 800.5H1219" stroke="#46506e" stroke-width="1"/>
<path d="M38 708.5V893H1219" fill="none" stroke="#7f9fe6" stroke-width="2"/>
<polyline points="45.9,803.0 53.8,801.1 61.6,800.8 69.5,801.7 77.4,802.0 85.2,800.8 93.1,800.8 101.0,799.1 108.9,798.8 116.8,798.8 124.6,798.8 132.5,794.1 140.4,794.1 148.2,785.8 156.1,794.6 164.0,787.0 171.9,787.0 179.8,785.4 187.6,785.1 195.5,785.8 203.4,785.8 211.2,768.2 219.1,776.3 227.0,764.1 234.9,764.1 242.8,760.8 250.6,760.5 258.5,750.9 266.4,761.9 274.2,758.8 282.1,760.0 290.0,747.7 297.9,752.0 305.8,740.9 313.6,747.4 321.5,734.2 329.4,734.0 337.2,732.9 345.1,746.9 353.0,746.9 360.9,760.8 368.8,759.9 376.6,787.7 384.5,787.7 392.4,787.7 400.2,777.1 408.1,815.1 416.0,813.6 423.9,824.7 431.8,825.1 439.6,825.9 447.5,811.1 455.4,810.4 463.2,790.1 471.1,795.1 479.0,788.9 486.9,788.9 494.8,788.9 502.6,788.9 510.5,788.3 518.4,787.8 526.2,787.8 534.1,817.2 542.0,787.8 549.9,801.8 557.8,782.8 565.6,810.4 573.5,769.6 581.4,782.8 589.2,782.8 597.1,782.8 605.0,755.9 612.9,756.0 620.8,756.0 628.6,792.1 636.5,773.8 644.4,783.7 652.2,757.1 660.1,756.3 668.0,755.3 675.9,754.5 683.8,729.7 691.6,730.0 699.5,730.1 707.4,731.2 715.2,718.0 723.1,720.5 731.0,720.9 738.9,723.9 746.8,711.4 754.6,723.6 762.5,710.4 770.4,709.9 778.2,709.9 786.1,709.9 794.0,709.9 801.9,709.6 809.8,709.1 817.6,708.8 825.5,708.8 833.4,708.8 841.2,708.8 849.1,709.8 857.0,709.8 864.9,708.8 872.8,708.8 880.6,708.8 888.5,708.8 896.4,708.8 904.2,708.8 912.1,708.8 920.0,708.8 927.9,708.8 935.8,708.8 943.6,710.4 951.5,709.4 959.4,708.8 967.2,708.8 975.1,708.8 983.0,708.8 990.9,708.8 998.8,708.8 1006.6,708.8 1014.5,708.8 1022.4,708.8 1030.2,708.8 1038.1,708.8 1046.0,708.8 1053.9,708.8 1061.8,708.8 1069.6,708.8 1077.5,708.8 1085.4,708.8 1093.2,708.8 1101.1,708.8 1109.0,708.8 1113,708.8" fill="none" stroke="#3dbcf6" stroke-width="2" stroke-linejoin="round" stroke-linecap="round"/>
<path d="M1163.5 733V892" stroke="#f0b24e" stroke-width="1.4"/>
<g font-family="'Liberation Sans',sans-serif" font-size="13.5" fill="#ececec" text-anchor="middle">
<text x="19" y="721.5">100</text><text x="19" y="805">50</text><text x="19" y="897">0</text>
<text x="38" y="910">0</text><text x="430" y="910">50</text><text x="823" y="910">100</text><text x="1217" y="910">150</text>
</g>
</svg>
<div class="abs" style="left:1112px;top:707.500px;width:104px;height:25.500px;box-sizing:border-box;border-radius:6px;background:linear-gradient(#ffdc9a,#fdb856);border:1px solid #8a5212;color:#5a3a10;font-family:'Liberation Mono','Noto Sans Mono CJK SC',monospace;font-size:15px;line-height:26px;text-align:center;white-space:pre"><span style="display:inline-block;transform:scaleX(.885)">143 - 99.9%</span></div>
<div class="pill song" style="top:706px;color:#fff;background:linear-gradient(#0b3584,#125ac4 40%,#2a8af6 80%,#3a9cff);box-shadow:0 2px 2px rgba(0,0,0,.5), inset 0 1px 3px #06205a, inset 0 -1px 1px #7ac0ff">胜率</div>
<div class="pill song" style="top:739px">吻合度</div>
<div class="pill song" style="top:771px">惨案现场</div>
<div class="pill song" style="top:803px">巅峰时刻</div>
<div class="pill song" style="top:875px;color:#a4ccff;text-shadow:0 0 1px #0a2a6a,1px 1px 0 #0a2a6a,-1px -1px 0 #0a2a6a,0 0 3px #1a4a9a">分享</div>
<div class="abs" style="left:0;top:36px;width:1px;height:875px;background:rgba(255,255,255,.07)"></div>
</body></html>
